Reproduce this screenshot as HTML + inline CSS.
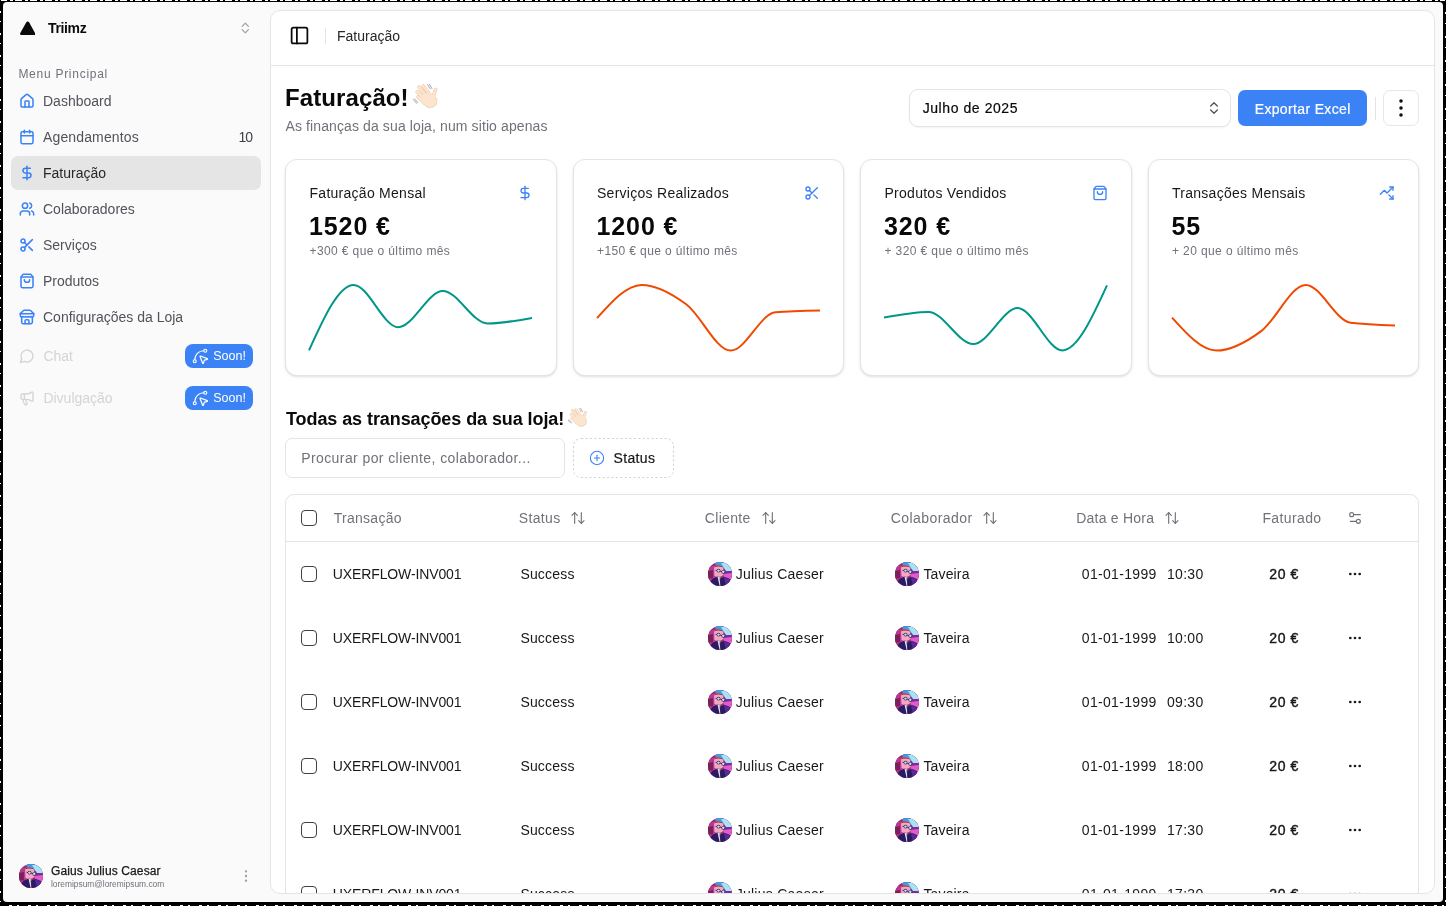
<!DOCTYPE html>
<html><head><meta charset="utf-8">
<style>
*{box-sizing:border-box;margin:0;padding:0}
html,body{width:1446px;height:906px;overflow:hidden;background:#000}
body{font-family:"Liberation Sans",sans-serif;position:relative;color:#18181b}
.app{will-change:transform;position:absolute;left:3px;top:2px;width:1440px;height:900px;background:#fafafa;border-radius:4px;overflow:hidden}
.t{position:absolute;line-height:1;white-space:nowrap}
svg.i{position:absolute;fill:none;stroke:currentColor;stroke-width:2;stroke-linecap:round;stroke-linejoin:round}
.nav{color:#52525b;font-size:14px}
.blue{color:#3b82f6}
.panel{position:absolute;left:267px;top:8px;width:1165px;height:884px;background:#fff;border:1px solid #e4e4e7;border-radius:10px;overflow:hidden}
.badge{position:absolute;left:185px;width:68px;height:24px;background:#3b82f6;border-radius:8px}
.card{position:absolute;top:159px;width:272px;height:217px;background:#fff;border:1px solid #e4e4e7;border-radius:12px;box-shadow:0 1px 3px 0 rgba(0,0,0,.1),0 1px 2px -1px rgba(0,0,0,.1)}
.th{color:#71717a;font-size:14px}
.td{color:#18181b;font-size:14px}
.cb{position:absolute;width:16px;height:16px;border:1px solid #3f3f46;border-radius:4px}
</style></head>
<body>
<svg width="0" height="0" style="position:absolute">
<defs>
<clipPath id="avc"><circle cx="12" cy="12" r="12"/></clipPath>
<symbol id="av" viewBox="0 0 24 24">
<g clip-path="url(#avc)">
<rect width="24" height="24" fill="#a3307f"/>
<path d="M0 0h24v24H0z" fill="#9a2b78"/>
<path d="M0 4h8v14H0z" fill="#b8388c"/>
<path d="M0 9l5-1v8l-5 1z" fill="#7c1f5c"/>
<path d="M5 0h19v9l-8-2-6-3z" fill="#3d9ee8"/>
<path d="M13 1h11v9l-6-1z" fill="#a9e3f2"/>
<path d="M16 9h8v6l-5 2z" fill="#7a2c9c"/>
<path d="M15 12l9-1v7l-7-1z" fill="#e35cc8"/>
<path d="M6 5c1.5-2.5 7-3 9 .5l.5 6.5c-.5 3-6 4-9 2z" fill="#f5a6c6"/>
<path d="M5.8 5.5c1.6-3 7.4-3.2 9.2 0-2.5-1.3-6.5-1.3-9.2 0z" fill="#8a2f2f"/>
<path d="M7.5 8.3l9 1.8" stroke="#2a2350" stroke-width=".8"/>
<circle cx="10.5" cy="8.6" r="1.9" fill="#2a2350"/><circle cx="15.3" cy="9.8" r="1.9" fill="#2a2350"/>
<circle cx="10.5" cy="8.6" r="1.2" fill="#cfe6ff"/><circle cx="15.3" cy="9.8" r="1.2" fill="#cfe6ff"/>
<circle cx="10.1" cy="8.9" r=".5" fill="#f0d060"/>
<path d="M1 24l3-7 6-2.5 3 1.5 4-1 5 2 2 7z" fill="#2b1b64"/>
<path d="M16 15.5l6 2 2 6.5h-6z" fill="#5a2a9a"/>
<path d="M9.5 14.8l2.2 9.2h1.3l-.6-8.6z" fill="#ecdff2"/>
<path d="M11.6 16.2l.8 7.8h.6l-.2-7.6z" fill="#1d1440"/>
</g>
</symbol>
<symbol id="wave" viewBox="0 0 34 32">
<g stroke-linecap="round" stroke-linejoin="round">
<g stroke="#e9bf98" fill="#e9bf98">
<path d="M15.2 6.1L22 15M11 7.1L19 16.5M9.2 11.8L17.5 20M10.1 17L17 23" stroke-width="3.5" fill="none"/>
<path d="M27.7 9.4L25.2 16.5" stroke-width="3.4" fill="none"/>
<path d="M16 13.5L25 15L28.6 19.5L28 24.2L24.5 26.8L20.5 27L15.5 23.5L12.5 19.5z" stroke-width="1.6"/>
</g>
<g stroke="#fce5cf" fill="#fce5cf">
<path d="M15.2 6.1L22 15M11 7.1L19 16.5M9.2 11.8L17.5 20M10.1 17L17 23" stroke-width="2.7" fill="none"/>
<path d="M27.7 9.4L25.2 16.5" stroke-width="2.6" fill="none"/>
<path d="M16 13.5L25 15L28.6 19.5L28 24.2L24.5 26.8L20.5 27L15.5 23.5L12.5 19.5z" stroke-width=".8"/>
</g>
<path d="M19.6 4.6l2.6 4.4M21.4 4.2l2.6 4.4M5.4 19.6l3.2 3.8M6.6 18.8l3.2 3.8" stroke="#8a8a8a" stroke-width=".75" fill="none"/>
</g>
</symbol>
</defs>
</svg>
<div style="position:absolute;left:0;top:0;width:1446px;height:1px;background:repeating-linear-gradient(90deg,#fff 0 7px,#000 7px 10px,#fff 10px 13px,#000 13px 15px)"></div>
<div style="position:absolute;left:0;top:905px;width:1446px;height:1px;background:repeating-linear-gradient(90deg,#000 0 9px,#fff 9px 12px,#000 12px 17px,#fff 17px 19px)"></div>
<div style="position:absolute;left:0;top:0;width:1px;height:906px;background:repeating-linear-gradient(180deg,#000 0 11px,#fff 11px 13px,#000 13px 21px,#fff 21px 22px)"></div>
<div style="position:absolute;left:1445px;top:0;width:1px;height:906px;background:repeating-linear-gradient(180deg,#000 0 12px,#fff 12px 14px,#000 14px 23px,#fff 23px 24px)"></div>
<div class="app">
<!-- SIDEBAR -->
<svg style="position:absolute;left:16.8px;top:18.6px" width="15.4" height="14.6" viewBox="0 0 15.4 14.6"><path d="M7.7 .4c.6 0 1.1.3 1.4.8l6 10.9c.5.9-.1 2.1-1.2 2.1H1.5C.4 14.2-.2 13 .3 12.1l6-10.9c.3-.5.8-.8 1.4-.8z" fill="#0a0a0a"/></svg>
<div class="t" style="left:45px;top:19px;font-size:14px;font-weight:bold;color:#0a0a0a;letter-spacing:-.35px">Triimz</div>
<svg class="i" style="left:0;top:0;color:#a1a1aa;stroke-width:1.3" width="260" height="40"><path d="M239.2 24.4l3.1-3.3 3.1 3.3M239.2 27.6l3.1 3.3 3.1-3.3"/></svg>

<div class="t" style="left:15.4px;top:65.8px;font-size:12px;color:#71717a;letter-spacing:.73px">Menu Principal</div>

<svg class="i blue" style="stroke-width:2.3;left:16px;top:90.8px" width="16" height="16" viewBox="0 0 24 24"><path d="M15 21v-8a1 1 0 0 0-1-1h-4a1 1 0 0 0-1 1v8"/><path d="M3 10a2 2 0 0 1 .709-1.528l7-5.999a2 2 0 0 1 2.582 0l7 5.999A2 2 0 0 1 21 10v9a2 2 0 0 1-2 2H5a2 2 0 0 1-2-2z"/></svg>
<div class="t nav" style="left:40px;top:92px">Dashboard</div>

<svg class="i blue" style="stroke-width:2.3;left:16px;top:126.8px" width="16" height="16" viewBox="0 0 24 24"><path d="M8 2v4"/><path d="M16 2v4"/><rect width="18" height="18" x="3" y="4" rx="2"/><path d="M3 10h18"/></svg>
<div class="t nav" style="left:40px;top:128px;letter-spacing:.14px">Agendamentos</div>
<div class="t" style="left:235.5px;top:128.2px;font-size:14px;color:#3f3f46;letter-spacing:-1px">10</div>

<div style="position:absolute;left:8px;top:154px;width:250px;height:34px;background:#e5e5e5;border-radius:7px"></div>
<svg class="i blue" style="stroke-width:2.3;left:16px;top:162.8px" width="16" height="16" viewBox="0 0 24 24"><line x1="12" x2="12" y1="2" y2="22"/><path d="M17 5H9.5a3.5 3.5 0 0 0 0 7h5a3.5 3.5 0 0 1 0 7H6"/></svg>
<div class="t nav" style="left:40px;top:164px;color:#27272a">Faturação</div>

<svg class="i blue" style="stroke-width:2.3;left:16px;top:198.8px" width="16" height="16" viewBox="0 0 24 24"><path d="M16 21v-2a4 4 0 0 0-4-4H6a4 4 0 0 0-4 4v2"/><circle cx="9" cy="7" r="4"/><path d="M22 21v-2a4 4 0 0 0-3-3.87"/><path d="M16 3.13a4 4 0 0 1 0 7.75"/></svg>
<div class="t nav" style="left:40px;top:200px">Colaboradores</div>

<svg class="i blue" style="stroke-width:2.3;left:16px;top:234.8px" width="16" height="16" viewBox="0 0 24 24"><circle cx="6" cy="6" r="3"/><path d="M8.12 8.12 12 12"/><path d="M20 4 8.12 15.88"/><circle cx="6" cy="18" r="3"/><path d="M14.8 14.8 20 20"/></svg>
<div class="t nav" style="left:40px;top:236px">Serviços</div>

<svg class="i blue" style="stroke-width:2.3;left:16px;top:270.8px" width="16" height="16" viewBox="0 0 24 24"><path d="M16 10a4 4 0 0 1-8 0"/><path d="M3.103 6.034h17.794"/><path d="M3.4 5.467a2 2 0 0 0-.4 1.2V20a2 2 0 0 0 2 2h14a2 2 0 0 0 2-2V6.667a2 2 0 0 0-.4-1.2l-2-2.667A2 2 0 0 0 17 2H7a2 2 0 0 0-1.6.8z"/></svg>
<div class="t nav" style="left:40px;top:272px">Produtos</div>

<svg class="i blue" style="stroke-width:2.3;left:16px;top:306.8px" width="16" height="16" viewBox="0 0 24 24"><path d="m2 7 4.41-4.41A2 2 0 0 1 7.83 2h8.34a2 2 0 0 1 1.42.59L22 7"/><path d="M4 12v8a2 2 0 0 0 2 2h12a2 2 0 0 0 2-2v-8"/><path d="M15 22v-4a2 2 0 0 0-2-2h-2a2 2 0 0 0-2 2v4"/><path d="M2 7h20"/><path d="M22 7v3a2 2 0 0 1-2 2a2.7 2.7 0 0 1-1.59-.63.7.7 0 0 0-.82 0A2.7 2.7 0 0 1 16 12a2.7 2.7 0 0 1-1.59-.63.7.7 0 0 0-.82 0A2.7 2.7 0 0 1 12 12a2.7 2.7 0 0 1-1.59-.63.7.7 0 0 0-.82 0A2.7 2.7 0 0 1 8 12a2.7 2.7 0 0 1-1.59-.63.7.7 0 0 0-.82 0A2.7 2.7 0 0 1 4 12a2 2 0 0 1-2-2V7"/></svg>
<div class="t nav" style="left:40px;top:308px">Configurações da Loja</div>

<svg class="i" style="left:16px;top:346px;color:#d4d4d8" width="16" height="16" viewBox="0 0 24 24"><path d="M7.9 20A9 9 0 1 0 4 16.1L2 22Z"/></svg>
<div class="t" style="left:40.4px;top:347px;font-size:14px;color:#d4d4d8">Chat</div>
<div class="badge" style="left:182px;top:342px"></div>
<svg class="i" style="left:187.7px;top:345px;color:#fff;stroke-width:1.6" width="18" height="18" viewBox="0 0 24 24"><path d="M12.034 12.681a.498.498 0 0 1 .647-.647l9 3.5a.5.5 0 0 1-.033.943l-3.444 1.068a1 1 0 0 0-.66.66l-1.067 3.443a.5.5 0 0 1-.943.033z"/><path d="M5 17A12 12 0 0 1 17 5"/><circle cx="19" cy="5" r="2"/><circle cx="5" cy="19" r="2"/></svg>
<div class="t" style="left:210.2px;top:347.6px;font-size:12.5px;color:#fff">Soon!</div>

<svg class="i" style="left:16px;top:388px;color:#d4d4d8" width="16" height="16" viewBox="0 0 24 24"><path d="M11 6a13 13 0 0 0 8.4-2.8A1 1 0 0 1 21 4v12a1 1 0 0 1-1.6.8A13 13 0 0 0 11 14H5a2 2 0 0 1-2-2V8a2 2 0 0 1 2-2z"/><path d="M6 14a12 12 0 0 0 2.4 7.2 2 2 0 0 0 3.2-2.4A8 8 0 0 1 10 14"/><path d="M8 6v8"/></svg>
<div class="t" style="left:40.4px;top:389px;font-size:14px;color:#d4d4d8">Divulgação</div>
<div class="badge" style="left:182px;top:384px"></div>
<svg class="i" style="left:187.7px;top:387px;color:#fff;stroke-width:1.6" width="18" height="18" viewBox="0 0 24 24"><path d="M12.034 12.681a.498.498 0 0 1 .647-.647l9 3.5a.5.5 0 0 1-.033.943l-3.444 1.068a1 1 0 0 0-.66.66l-1.067 3.443a.5.5 0 0 1-.943.033z"/><path d="M5 17A12 12 0 0 1 17 5"/><circle cx="19" cy="5" r="2"/><circle cx="5" cy="19" r="2"/></svg>
<div class="t" style="left:210.2px;top:389.6px;font-size:12.5px;color:#fff">Soon!</div>

<!-- footer user -->
<svg style="position:absolute;left:16px;top:862px" width="24" height="24"><use href="#av"/></svg>
<div class="t" style="left:48px;top:863px;font-size:12px;color:#18181b;letter-spacing:.12px;-webkit-text-stroke:.25px #18181b">Gaius Julius Caesar</div>
<div class="t" style="left:48px;top:877.5px;font-size:8.4px;color:#71717a">loremipsum@loremipsum.com</div>
<svg class="i" style="left:235px;top:866px;color:#a1a1aa;stroke-width:1.6" width="16" height="16" viewBox="0 0 24 24"><circle cx="12" cy="12" r="1"/><circle cx="12" cy="5" r="1"/><circle cx="12" cy="19" r="1"/></svg>

<!-- MAIN PANEL -->
<div class="panel" id="panel">
<div style="position:absolute;left:-271px;top:-11px;width:1446px;height:906px">
<svg class="i" style="left:288.75px;top:25.25px;color:#09090b;stroke-width:2" width="21" height="21" viewBox="0 0 24 24"><rect width="18" height="18" x="3" y="3" rx="2"/><path d="M9 3v18"/></svg>
<div style="position:absolute;left:325px;top:28px;width:1px;height:16px;background:#e4e4e7"></div>
<div class="t" style="left:337px;top:29.05px;font-size:14px;color:#27272a">Faturação</div>
<div style="position:absolute;left:271px;top:65px;width:1163px;height:1px;background:#e4e4e7"></div>
<div class="t" style="left:285px;top:86.2px;font-size:24px;font-weight:bold;color:#0a0a0a;letter-spacing:.1px">Faturação!</div>
<svg style="position:absolute;left:408px;top:80px" width="34" height="32"><use href="#wave"/></svg>
<div class="t" style="left:285.5px;top:118.95px;font-size:14px;color:#71717a;letter-spacing:.11px">As finanças da sua loja, num sitio apenas</div>
<div style="position:absolute;left:909px;top:89px;width:322px;height:38px;border:1px solid #e4e4e7;border-radius:9px;background:#fff;box-shadow:0 1px 2px rgba(0,0,0,.05)"></div>
<div class="t" style="left:922.7px;top:101.15px;font-size:14px;color:#09090b;letter-spacing:.57px;-webkit-text-stroke:.2px #09090b">Julho de 2025</div>
<svg class="i" style="left:1206px;top:100.4px;color:#52525b" width="16" height="16" viewBox="0 0 24 24"><path d="m7 15 5 5 5-5"/><path d="m7 9 5-5 5 5"/></svg>
<div style="position:absolute;left:1238px;top:90px;width:129px;height:36px;border-radius:7px;background:#3b82f6"></div>
<div class="t" style="left:1254.7px;top:101.85px;font-size:14px;color:#fff;letter-spacing:.35px;-webkit-text-stroke:.2px #fff">Exportar Excel</div>
<div style="position:absolute;left:1375px;top:97px;width:1px;height:23px;background:#e4e4e7"></div>
<div style="position:absolute;left:1383px;top:90px;width:36px;height:36px;border:1px solid #e2e8f0;border-radius:7px;background:#fff"></div>
<svg class="i" style="left:1388.8px;top:96.2px;color:#09090b;stroke-width:1.5" width="24" height="24" viewBox="0 0 24 24"><circle cx="12" cy="12" r="1"/><circle cx="12" cy="5" r="1"/><circle cx="12" cy="19" r="1"/></svg>
<div class="card" style="left:285.0px;width:271.5px"></div>
<div class="t" style="left:309.5px;top:186.05px;font-size:14px;color:#18181b;letter-spacing:.27px">Faturação Mensal</div>
<svg class="i blue" style="left:516.5px;top:185px" width="16" height="16" viewBox="0 0 24 24"><line x1="12" x2="12" y1="2" y2="22"/><path d="M17 5H9.5a3.5 3.5 0 0 0 0 7h5a3.5 3.5 0 0 1 0 7H6"/></svg>
<div class="t" style="left:309.0px;top:214.1px;font-size:25px;font-weight:bold;color:#09090b;letter-spacing:.9px">1520 €</div>
<div class="t" style="left:309.5px;top:245.44px;font-size:12px;color:#71717a;letter-spacing:.39px">+300 € que o último mês</div>
<svg style="position:absolute;left:309.4px;top:280px;overflow:visible" width="223" height="80"><path d="M0.00,70.40C14.87,37.65 29.73,4.90 44.60,4.90C59.47,4.90 74.33,47.20 89.20,47.20C104.07,47.20 118.93,11.00 133.80,11.00C148.67,11.00 163.53,43.40 178.40,43.40C193.27,43.40 208.13,40.70 223.00,38.00" fill="none" stroke="#009688" stroke-width="2"/></svg>
<div class="card" style="left:572.5px;width:271.5px"></div>
<div class="t" style="left:597.0px;top:186.05px;font-size:14px;color:#18181b;letter-spacing:.27px">Serviços Realizados</div>
<svg class="i blue" style="left:804.0px;top:185px" width="16" height="16" viewBox="0 0 24 24"><circle cx="6" cy="6" r="3"/><path d="M8.12 8.12 12 12"/><path d="M20 4 8.12 15.88"/><circle cx="6" cy="18" r="3"/><path d="M14.8 14.8 20 20"/></svg>
<div class="t" style="left:596.5px;top:214.1px;font-size:25px;font-weight:bold;color:#09090b;letter-spacing:.9px">1200 €</div>
<div class="t" style="left:597.0px;top:245.44px;font-size:12px;color:#71717a;letter-spacing:.39px">+150 € que o último mês</div>
<svg style="position:absolute;left:596.9px;top:280px;overflow:visible" width="223" height="80"><path d="M0.00,38.20C14.87,21.55 29.73,4.90 44.60,4.90C59.47,4.90 74.33,13.25 89.20,24.20C104.07,35.15 118.93,70.60 133.80,70.60C148.67,70.60 163.53,33.50 178.40,32.30C193.27,31.10 208.13,30.80 223.00,30.50" fill="none" stroke="#f04a00" stroke-width="2"/></svg>
<div class="card" style="left:860.0px;width:271.5px"></div>
<div class="t" style="left:884.5px;top:186.05px;font-size:14px;color:#18181b;letter-spacing:.27px">Produtos Vendidos</div>
<svg class="i blue" style="left:1091.5px;top:185px" width="16" height="16" viewBox="0 0 24 24"><path d="M16 10a4 4 0 0 1-8 0"/><path d="M3.103 6.034h17.794"/><path d="M3.4 5.467a2 2 0 0 0-.4 1.2V20a2 2 0 0 0 2 2h14a2 2 0 0 0 2-2V6.667a2 2 0 0 0-.4-1.2l-2-2.667A2 2 0 0 0 17 2H7a2 2 0 0 0-1.6.8z"/></svg>
<div class="t" style="left:884.0px;top:214.1px;font-size:25px;font-weight:bold;color:#09090b;letter-spacing:.9px">320 €</div>
<div class="t" style="left:884.5px;top:245.44px;font-size:12px;color:#71717a;letter-spacing:.39px">+ 320 € que o último mês</div>
<svg style="position:absolute;left:884.4px;top:280px;overflow:visible" width="223" height="80"><path d="M0.00,37.60C14.87,34.75 29.73,31.90 44.60,31.90C59.47,31.90 74.33,64.10 89.20,64.10C104.07,64.10 118.93,28.10 133.80,28.10C148.67,28.10 163.53,70.40 178.40,70.40C193.27,70.40 208.13,37.85 223.00,5.30" fill="none" stroke="#009688" stroke-width="2"/></svg>
<div class="card" style="left:1147.5px;width:271.5px"></div>
<div class="t" style="left:1172.0px;top:186.05px;font-size:14px;color:#18181b;letter-spacing:.27px">Transações Mensais</div>
<svg class="i blue" style="left:1379.0px;top:185px" width="16" height="16" viewBox="0 0 24 24"><path d="M14.828 14.828 21 21"/><path d="M21 16v5h-5"/><path d="m21 3-9 9-4-4-6 6"/><path d="M21 8V3h-5"/></svg>
<div class="t" style="left:1171.5px;top:214.1px;font-size:25px;font-weight:bold;color:#09090b;letter-spacing:.9px">55</div>
<div class="t" style="left:1172.0px;top:245.44px;font-size:12px;color:#71717a;letter-spacing:.39px">+ 20 que o último mês</div>
<svg style="position:absolute;left:1171.9px;top:280px;overflow:visible" width="223" height="80"><path d="M0.00,37.60C14.87,54.10 29.73,70.60 44.60,70.60C59.47,70.60 74.33,62.05 89.20,51.10C104.07,40.15 118.93,4.90 133.80,4.90C148.67,4.90 163.53,40.90 178.40,42.70C193.27,44.50 208.13,44.95 223.00,45.40" fill="none" stroke="#f04a00" stroke-width="2"/></svg>
<div class="t" style="left:286px;top:410px;font-size:18px;font-weight:bold;color:#0a0a0a;letter-spacing:-.08px">Todas as transações da sua loja!</div>
<svg style="position:absolute;left:563.6px;top:404.6px" width="26.4" height="24.8"><use href="#wave"/></svg>
<div style="position:absolute;left:285px;top:438px;width:280px;height:40px;border:1px solid #e4e4e7;border-radius:7px;background:#fff"></div>
<div class="t" style="left:301.2px;top:451.15px;font-size:14px;color:#71717a;letter-spacing:.41px">Procurar por cliente, colaborador...</div>
<svg style="position:absolute;left:573px;top:438px" width="101" height="40"><rect x=".5" y=".5" width="100" height="39" rx="7.5" fill="#fff" stroke="#d4d4d8" stroke-dasharray="2.2 2.2"/></svg>
<svg class="i blue" style="left:589.3px;top:449.9px;stroke-width:1.6" width="16" height="16" viewBox="0 0 24 24"><circle cx="12" cy="12" r="10"/><path d="M8 12h8"/><path d="M12 8v8"/></svg>
<div class="t" style="left:613.5px;top:450.95px;font-size:14px;color:#18181b;letter-spacing:.36px;-webkit-text-stroke:.2px #18181b">Status</div>
<div style="position:absolute;left:285px;top:494px;width:1134px;height:500px;border:1px solid #e4e4e7;border-radius:9px;background:#fff"></div>
<div style="position:absolute;left:286px;top:541px;width:1132px;height:1px;background:#e4e4e7"></div>
<div class="cb" style="left:301px;top:510px"></div>
<div class="t th" style="left:333.8px;top:511.45px;letter-spacing:0.26px">Transação</div>
<div class="t th" style="left:518.7px;top:511.45px;letter-spacing:0.38px">Status</div>
<svg class="i" style="left:570.4px;top:510.2px;color:#71717a;stroke-width:1.7" width="16" height="16" viewBox="0 0 24 24"><path d="m21 16-4 4-4-4"/><path d="M17 20V4"/><path d="m3 8 4-4 4 4"/><path d="M7 4v16"/></svg>
<div class="t th" style="left:704.8px;top:511.45px;letter-spacing:0.31px">Cliente</div>
<svg class="i" style="left:760.55px;top:510.2px;color:#71717a;stroke-width:1.7" width="16" height="16" viewBox="0 0 24 24"><path d="m21 16-4 4-4-4"/><path d="M17 20V4"/><path d="m3 8 4-4 4 4"/><path d="M7 4v16"/></svg>
<div class="t th" style="left:890.7px;top:511.45px;letter-spacing:0.44px">Colaborador</div>
<svg class="i" style="left:982.15px;top:510.2px;color:#71717a;stroke-width:1.7" width="16" height="16" viewBox="0 0 24 24"><path d="m21 16-4 4-4-4"/><path d="M17 20V4"/><path d="m3 8 4-4 4 4"/><path d="M7 4v16"/></svg>
<div class="t th" style="left:1076.2px;top:511.45px;letter-spacing:0.23px">Data e Hora</div>
<svg class="i" style="left:1164.3px;top:510.2px;color:#71717a;stroke-width:1.7" width="16" height="16" viewBox="0 0 24 24"><path d="m21 16-4 4-4-4"/><path d="M17 20V4"/><path d="m3 8 4-4 4 4"/><path d="M7 4v16"/></svg>
<div class="t th" style="left:1262.4px;top:511.45px;letter-spacing:0.39px">Faturado</div>
<svg class="i" style="left:1347px;top:510px;color:#71717a;stroke-width:1.7" width="16" height="16" viewBox="0 0 24 24"><path d="M20 7h-9"/><path d="M14 17H5"/><circle cx="17" cy="17" r="3"/><circle cx="7" cy="7" r="3"/></svg>
<div class="cb" style="left:301px;top:566px"></div>
<div class="t td" style="left:332.8px;top:567.15px;letter-spacing:-.12px">UXERFLOW-INV001</div>
<div class="t td" style="left:520.4px;top:567.15px;letter-spacing:.18px">Success</div>
<svg style="position:absolute;left:707.6px;top:562px" width="24" height="24"><use href="#av"/></svg>
<div class="t td" style="left:735.7px;top:567.15px;letter-spacing:.26px">Julius Caeser</div>
<svg style="position:absolute;left:894.7px;top:562px" width="24" height="24"><use href="#av"/></svg>
<div class="t td" style="left:923.4px;top:567.15px;letter-spacing:.15px">Taveira</div>
<div class="t td" style="left:1081.8px;top:567.15px;letter-spacing:.32px">01-01-1999</div>
<div class="t td" style="left:1167px;top:567.15px;letter-spacing:.3px">10:30</div>
<div class="t td" style="left:1269.3px;top:567.15px;-webkit-text-stroke:.4px #18181b;letter-spacing:.55px">20 €</div>
<svg class="i" style="left:1346.9px;top:566.3px;color:#18181b" width="16" height="16" viewBox="0 0 24 24"><circle cx="12" cy="12" r="1"/><circle cx="19" cy="12" r="1"/><circle cx="5" cy="12" r="1"/></svg>
<div class="cb" style="left:301px;top:630px"></div>
<div class="t td" style="left:332.8px;top:631.15px;letter-spacing:-.12px">UXERFLOW-INV001</div>
<div class="t td" style="left:520.4px;top:631.15px;letter-spacing:.18px">Success</div>
<svg style="position:absolute;left:707.6px;top:626px" width="24" height="24"><use href="#av"/></svg>
<div class="t td" style="left:735.7px;top:631.15px;letter-spacing:.26px">Julius Caeser</div>
<svg style="position:absolute;left:894.7px;top:626px" width="24" height="24"><use href="#av"/></svg>
<div class="t td" style="left:923.4px;top:631.15px;letter-spacing:.15px">Taveira</div>
<div class="t td" style="left:1081.8px;top:631.15px;letter-spacing:.32px">01-01-1999</div>
<div class="t td" style="left:1167px;top:631.15px;letter-spacing:.3px">10:00</div>
<div class="t td" style="left:1269.3px;top:631.15px;-webkit-text-stroke:.4px #18181b;letter-spacing:.55px">20 €</div>
<svg class="i" style="left:1346.9px;top:630.3px;color:#18181b" width="16" height="16" viewBox="0 0 24 24"><circle cx="12" cy="12" r="1"/><circle cx="19" cy="12" r="1"/><circle cx="5" cy="12" r="1"/></svg>
<div class="cb" style="left:301px;top:694px"></div>
<div class="t td" style="left:332.8px;top:695.15px;letter-spacing:-.12px">UXERFLOW-INV001</div>
<div class="t td" style="left:520.4px;top:695.15px;letter-spacing:.18px">Success</div>
<svg style="position:absolute;left:707.6px;top:690px" width="24" height="24"><use href="#av"/></svg>
<div class="t td" style="left:735.7px;top:695.15px;letter-spacing:.26px">Julius Caeser</div>
<svg style="position:absolute;left:894.7px;top:690px" width="24" height="24"><use href="#av"/></svg>
<div class="t td" style="left:923.4px;top:695.15px;letter-spacing:.15px">Taveira</div>
<div class="t td" style="left:1081.8px;top:695.15px;letter-spacing:.32px">01-01-1999</div>
<div class="t td" style="left:1167px;top:695.15px;letter-spacing:.3px">09:30</div>
<div class="t td" style="left:1269.3px;top:695.15px;-webkit-text-stroke:.4px #18181b;letter-spacing:.55px">20 €</div>
<svg class="i" style="left:1346.9px;top:694.3px;color:#18181b" width="16" height="16" viewBox="0 0 24 24"><circle cx="12" cy="12" r="1"/><circle cx="19" cy="12" r="1"/><circle cx="5" cy="12" r="1"/></svg>
<div class="cb" style="left:301px;top:758px"></div>
<div class="t td" style="left:332.8px;top:759.15px;letter-spacing:-.12px">UXERFLOW-INV001</div>
<div class="t td" style="left:520.4px;top:759.15px;letter-spacing:.18px">Success</div>
<svg style="position:absolute;left:707.6px;top:754px" width="24" height="24"><use href="#av"/></svg>
<div class="t td" style="left:735.7px;top:759.15px;letter-spacing:.26px">Julius Caeser</div>
<svg style="position:absolute;left:894.7px;top:754px" width="24" height="24"><use href="#av"/></svg>
<div class="t td" style="left:923.4px;top:759.15px;letter-spacing:.15px">Taveira</div>
<div class="t td" style="left:1081.8px;top:759.15px;letter-spacing:.32px">01-01-1999</div>
<div class="t td" style="left:1167px;top:759.15px;letter-spacing:.3px">18:00</div>
<div class="t td" style="left:1269.3px;top:759.15px;-webkit-text-stroke:.4px #18181b;letter-spacing:.55px">20 €</div>
<svg class="i" style="left:1346.9px;top:758.3px;color:#18181b" width="16" height="16" viewBox="0 0 24 24"><circle cx="12" cy="12" r="1"/><circle cx="19" cy="12" r="1"/><circle cx="5" cy="12" r="1"/></svg>
<div class="cb" style="left:301px;top:822px"></div>
<div class="t td" style="left:332.8px;top:823.15px;letter-spacing:-.12px">UXERFLOW-INV001</div>
<div class="t td" style="left:520.4px;top:823.15px;letter-spacing:.18px">Success</div>
<svg style="position:absolute;left:707.6px;top:818px" width="24" height="24"><use href="#av"/></svg>
<div class="t td" style="left:735.7px;top:823.15px;letter-spacing:.26px">Julius Caeser</div>
<svg style="position:absolute;left:894.7px;top:818px" width="24" height="24"><use href="#av"/></svg>
<div class="t td" style="left:923.4px;top:823.15px;letter-spacing:.15px">Taveira</div>
<div class="t td" style="left:1081.8px;top:823.15px;letter-spacing:.32px">01-01-1999</div>
<div class="t td" style="left:1167px;top:823.15px;letter-spacing:.3px">17:30</div>
<div class="t td" style="left:1269.3px;top:823.15px;-webkit-text-stroke:.4px #18181b;letter-spacing:.55px">20 €</div>
<svg class="i" style="left:1346.9px;top:822.3px;color:#18181b" width="16" height="16" viewBox="0 0 24 24"><circle cx="12" cy="12" r="1"/><circle cx="19" cy="12" r="1"/><circle cx="5" cy="12" r="1"/></svg>
<div class="cb" style="left:301px;top:886px"></div>
<div class="t td" style="left:332.8px;top:887.15px;letter-spacing:-.12px">UXERFLOW-INV001</div>
<div class="t td" style="left:520.4px;top:887.15px;letter-spacing:.18px">Success</div>
<svg style="position:absolute;left:707.6px;top:882px" width="24" height="24"><use href="#av"/></svg>
<div class="t td" style="left:735.7px;top:887.15px;letter-spacing:.26px">Julius Caeser</div>
<svg style="position:absolute;left:894.7px;top:882px" width="24" height="24"><use href="#av"/></svg>
<div class="t td" style="left:923.4px;top:887.15px;letter-spacing:.15px">Taveira</div>
<div class="t td" style="left:1081.8px;top:887.15px;letter-spacing:.32px">01-01-1999</div>
<div class="t td" style="left:1167px;top:887.15px;letter-spacing:.3px">17:30</div>
<div class="t td" style="left:1269.3px;top:887.15px;-webkit-text-stroke:.4px #18181b;letter-spacing:.55px">20 €</div>
<svg class="i" style="left:1346.9px;top:886.3px;color:#18181b" width="16" height="16" viewBox="0 0 24 24"><circle cx="12" cy="12" r="1"/><circle cx="19" cy="12" r="1"/><circle cx="5" cy="12" r="1"/></svg>
</div>
</div>
</div>
</body></html>
